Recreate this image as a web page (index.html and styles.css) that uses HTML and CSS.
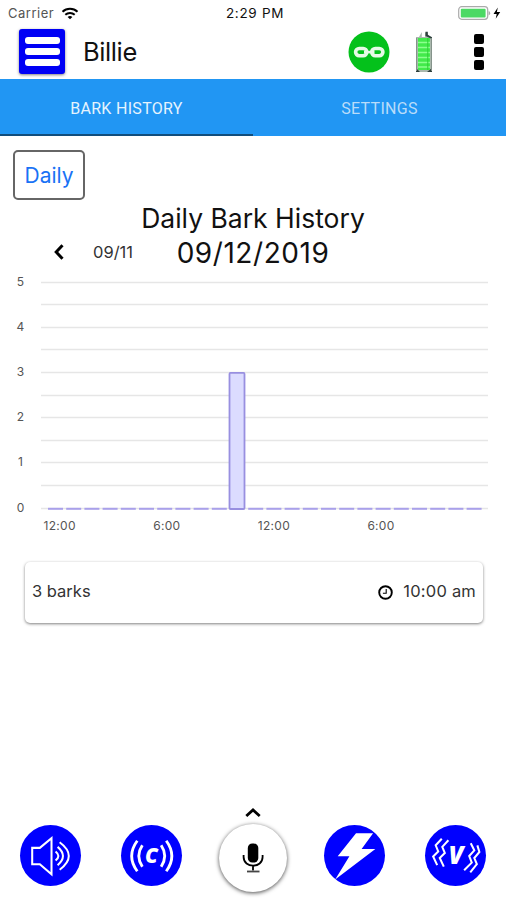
FILE: index.html
```
<!DOCTYPE html>
<html lang="en">
<head>
    <meta charset="UTF-8">
    <meta name="viewport" content="width=device-width, initial-scale=1.0">
    <title>Bark History</title>
    <link rel="stylesheet" href="styles.css">
</head>

<body>
    <div class="status-bar">
      <div class="carrier">
        <span>Carrier</span>
        <svg width="18" height="13" viewBox="0 0 18 13" fill="none" stroke="#000" stroke-width="2">
          <path d="M1.5 4.8a11 11 0 0 1 15 0" />
          <path d="M4.3 7.8a7 7 0 0 1 9.4 0" />
          <path d="M9 12.3 6.6 10a3.6 3.6 0 0 1 4.8 0z" fill="#000" stroke="none" />
        </svg>
      </div>
      <span class="clock">2:29 PM</span>
      <div class="power">
        <svg width="44" height="16" viewBox="0 0 44 16">
          <rect x="0.7" y="1.7" width="29" height="12.6" rx="3" fill="#fff" stroke="#aaa" stroke-width="1.2" />
          <rect x="2.8" y="3.7" width="24.8" height="8.8" rx="1" fill="#4cd964" />
          <path d="M30.6 6v4.4q1.6-.6 1.6-2.2T30.6 6z" fill="#aaa" />
          <path d="M39.8 2.5 35.5 9h3.2l-1 4.8L42.2 7h-3.3z" />
        </svg>
      </div>
    </div>

    <header class="header">
      <button class="menu-btn" aria-label="Menu"><span></span><span></span><span></span></button>
      <h1>Billie</h1>
      <svg class="link-icon" width="42" height="42" viewBox="0 0 42 42">
        <circle cx="21" cy="21" r="20.5" fill="#04c11b" />
        <g fill="none" stroke="#e6fae6" stroke-width="3.6">
          <rect x="7.600" y="17.500" width="11.200" height="7.200" rx="3.600" />
          <rect x="23.700" y="17.500" width="11.200" height="7.200" rx="3.600" />
          <path d="M16 21.100h10.500" stroke-width="2.600" />
        </g>
      </svg>
      <svg class="collar-battery" width="18" height="42" viewBox="0 0 18 42">
        <path d="M1 6h3l2.500-4.500h6L13.500 5 17 6.500V41H1z" fill="#a9b8ad" />
        <path d="M6.800 0h3.200v6H6.800z" fill="#fff" />
        <path d="M10.500.8h2.300v3L17 6.300v1.800L10.500 5zM1 37l4 4H1zM17 37l-5 4h5z" fill="#2e403d" />
        <rect x="3" y="7" width="12" height="32" fill="#43ea4b" />
        <path d="M3 11.500h12M3 16.500h12M3 21.500h12M3 26.500h12M3 31.500h12M3 36h12" stroke="#8cff8e" stroke-width="1.300" />
        <path d="M12.800 7v32" stroke="#2bd033" />
        <path d="M1.500 7v33M16.500 7v33" stroke="#85938b" />
      </svg>
      <button class="more-btn" aria-label="More"><span></span><span></span><span></span></button>
    </header>

    <nav class="tabs">
      <a class="tab active">BARK HISTORY</a>
      <a class="tab">SETTINGS</a>
    </nav>

    <main>
      <button class="period-btn">Daily</button>

      <h2>Daily Bark History</h2>
      <div class="date-row">
        <div class="previous">
          <svg width="10" height="16" viewBox="0 0 10 16" fill="none" stroke="#000" stroke-width="3">
            <path d="M8.5 1.200 2.200 8l6.300 6.800" />
          </svg>
          <span>09/11</span>
        </div>
        <h2 class="current-date">09/12/2019</h2>
      </div>

      <svg id="chart" width="506" height="270" viewBox="0 0 506 270"></svg>

      <div class="bark-card">
        <span>3 barks</span>
        <div class="bark-time">
          <svg width="15" height="15" viewBox="0 0 15 15" fill="none" stroke="#000">
            <circle cx="7.5" cy="7.5" r="6.3" stroke-width="1.9" />
            <path d="M8.2 4v4.3H4.9" stroke-width="1.1" />
          </svg>
          <span>10:00 am</span>
        </div>
      </div>
    </main>

    <footer class="actions">
      <button class="action" aria-label="Sound">
        <svg viewBox="0 0 60 60" fill="none" stroke="#fff" stroke-width="2">
          <path d="M12 22.5h7.5L31 13v35.500L19.500 38.500H12z" />
          <path d="M35 26q5.500 4.500 0 9M37 21.500q10.500 9 0 18M39 17q18 13.500 0 27" />
        </svg>
      </button>
      <button class="action" aria-label="Correction">
        <svg viewBox="0 0 60 60" fill="none" stroke="#fff" stroke-width="2.8">
          <path d="M16 15.500q-11 15 0 30M21 20q-7 10.500 0 21M39.500 20q7 10.500 0 21M44.500 15.500q11 15 0 30" />
          <text x="30" y="37.500" class="letter" font-size="20">C</text>
        </svg>
      </button>
      <div class="mic-wrap">
        <svg class="up-arrow" width="16" height="10" viewBox="0 0 16 10" fill="none" stroke="#000" stroke-width="2.8">
          <path d="m1.300 8 6.700-6 6.700 6" />
        </svg>
        <button class="mic" aria-label="Record">
          <svg width="22" height="30" viewBox="0 0 22 30">
            <rect x="5.800" y="0.500" width="10.500" height="19" rx="4.500" />
            <path d="M1.600 12v2c0 11.500 19 11.500 19 0v-2M11 22.500v5" fill="none" stroke="#000" stroke-width="1.8" />
            <path d="M5 28.500h12.500" stroke="#444" stroke-width="1.8" />
          </svg>
        </button>
      </div>
      <button class="action" aria-label="Shock">
        <svg viewBox="0 0 60 60" fill="#fff">
          <path d="M31.500 8h16.800L37 23.500h13.500L11 53.500l14-22.800H13.500z" />
        </svg>
      </button>
      <button class="action" aria-label="Vibration">
        <svg viewBox="0 0 60 60" fill="none" stroke="#fff" stroke-width="2">
          <path d="m16.500 13.500-6 6.500 2.500 6-5 5 4 8.500M23 15l-6 6.500 2.500 6-5 5 4 8.500" />
          <path d="m45 18 3.500 7-5 5.500 2.500 6.500-7.500 7.500M51.500 20l2 6.500-5 6 2.500 6-6.500 8" />
          <text x="30.500" y="38.500" class="letter" font-size="24">V</text>
        </svg>
      </button>
    </footer>

    <script>
const barks = [0, 0, 0, 0, 0, 0, 0, 0, 0, 0, 3, 0, 0, 0, 0, 0, 0, 0, 0, 0, 0, 0, 0, 0];
const hours = { 0: "12:00", 6: "6:00", 12: "12:00", 18: "6:00" };

const chart = document.querySelector("#chart");
const zeroY = 237.5;
const unit = 45.2;

function draw(tag, attrs, text) {
  const el = document.createElementNS("http://www.w3.org/2000/svg", tag);
  Object.keys(attrs).forEach((key) => el.setAttribute(key, attrs[key]));
  if (text !== undefined) el.textContent = text;
  chart.appendChild(el);
}

// Grid
for (let value = 0; value <= 5; value += 0.5) {
  const y = Math.round(zeroY - value * unit) - 0.5;
  draw("path", { d: `M41 ${y}H488`, class: "grid-line" });

  if (value % 1 === 0) {
    draw("text", { x: 20.5, y: y + 3.5, class: "chart-label" }, value);
  }
}

// Bars
barks.forEach((count, hour) => {
  const x = 48 + hour * 18.2;

  if (count) {
    draw("rect", { x: x - 0.5, y: zeroY - count * unit, width: 15, height: count * unit + 0.5, rx: 1, class: "bar" });
  } else {
    draw("path", { d: `M${x} ${zeroY + 0.3}h15`, class: "empty-bar" });
  }

  if (hours[hour]) {
    draw("text", { x: x + 11.7 - hour * 0.35, y: 259, class: "chart-label hour-label" }, hours[hour]);
  }
});
    </script>
</body>
</html>
```
FILE: styles.css
```
* {
    margin: 0;
    padding: 0;
    box-sizing: border-box;
    font-family: Inter, "Liberation Sans", sans-serif;
}

body {
    display: flex;
    flex-direction: column;
    height: 100vh;
    background-color: #fff;
    color: #111;
    overflow: hidden;
}

button {
    border: none;
    background: none;
    cursor: pointer;
}

svg {
    display: block;
    flex-shrink: 0;
}

/* Status bar */
.status-bar {
    display: grid;
    grid-template-columns: 1fr auto 1fr;
    align-items: center;
    height: 26px;
    padding: 0 4px 0 8px;
    font-size: 13px;
}

.carrier {
    display: flex;
    align-items: center;
    gap: 7px;
    color: #555;
    letter-spacing: 0.5px;
}

.clock {
    font-size: 13.5px;
    letter-spacing: 0.7px;
}

.power {
    display: flex;
    justify-content: flex-end;
}

/* Header */
.header {
    display: flex;
    align-items: center;
    height: 53px;
    padding: 0 22px 2px 19px;
}

.menu-btn {
    display: flex;
    flex-direction: column;
    align-items: center;
    justify-content: center;
    gap: 4px;
    width: 46px;
    height: 45px;
    border-radius: 3px;
    background-color: #0000f5;
    box-shadow: 0 1px 3px rgba(0, 0, 0, 0.5);
}

.menu-btn span {
    width: 35px;
    height: 7px;
    border-radius: 3px;
    background-color: #fff;
}

.header h1 {
    flex: 1;
    margin-left: 18px;
    font-size: 25.5px;
    font-weight: 400;
    letter-spacing: -0.4px;
}

.collar-battery {
    margin: 0 41px 0 25px;
}

.more-btn {
    display: flex;
    flex-direction: column;
    gap: 3px;
}

.more-btn span {
    width: 10px;
    height: 10px;
    border-radius: 2px;
    background-color: #000;
}

/* Tabs */
.tabs {
    display: flex;
    height: 57px;
    background-color: #2196f3;
}

.tab {
    display: flex;
    flex: 1;
    align-items: center;
    justify-content: center;
    padding-top: 4px;
    border-bottom: 2px solid transparent;
    font-family: Roboto, sans-serif;
    font-size: 16px;
    letter-spacing: 0.3px;
    color: #b9dcfa;
}

.tab.active {
    border-color: #114d7c;
    color: #e5f3fe;
}

/* History */
main {
    display: flex;
    flex: 1;
    flex-direction: column;
}

.period-btn {
    width: 72px;
    height: 50px;
    margin: 14px 0 0 13px;
    border: 2px solid #666;
    border-radius: 5px;
    font-size: 21px;
    color: #1972f5;
}

h2 {
    font-size: 26.5px;
    font-weight: 400;
    line-height: 35px;
    text-align: center;
}

main > h2 {
    margin-top: 1px;
}

.date-row {
    display: grid;
    grid-template-columns: 1fr auto 1fr;
    align-items: center;
    height: 35px;
}

.current-date {
    font-size: 28px;
    letter-spacing: 0.55px;
}

.previous {
    display: flex;
    align-items: center;
    gap: 29px;
    padding: 0 0 3px 54px;
    font-size: 16.5px;
    color: #333;
}

.grid-line {
    stroke: #e6e6e6;
    stroke-width: 1.4;
}

.bar {
    fill: #dcdcff;
    stroke: #988fe0;
    stroke-width: 1.8;
}

.empty-bar {
    stroke: #a9a0ea;
    stroke-width: 2;
}

.chart-label {
    font-size: 12px;
    fill: #555;
    text-anchor: middle;
}

.hour-label {
    letter-spacing: 0.3px;
}

.bark-card {
    display: flex;
    align-items: center;
    justify-content: space-between;
    height: 61px;
    margin: 21px 23px 0 25px;
    padding: 0 7px 3px;
    border-radius: 5px;
    box-shadow: 0 1px 3px rgba(0, 0, 0, 0.5);
    font-size: 16.5px;
    color: #333;
}

.bark-time {
    display: flex;
    align-items: center;
    gap: 10px;
    letter-spacing: 0.2px;
}

.bark-time svg {
    margin-top: 2px;
}

/* Bottom actions */
.actions {
    display: grid;
    grid-template-columns: repeat(5, 1fr);
    align-items: end;
    justify-items: center;
    height: 93px;
    padding-bottom: 8px;
}

.action {
    width: 61px;
    height: 61px;
    margin-bottom: 6px;
    border-radius: 50%;
    background-color: #00f;
}

.letter {
    font-family: "Open Sans", sans-serif;
    font-weight: 800;
    font-style: italic;
    fill: #fff;
    stroke: none;
    text-anchor: middle;
}

.mic-wrap {
    display: flex;
    flex-direction: column;
    align-items: center;
    gap: 6px;
}

.mic {
    display: flex;
    align-items: center;
    justify-content: center;
    width: 68px;
    height: 68px;
    border-radius: 50%;
    background-color: #fff;
    box-shadow: 0 1px 4px rgba(0, 0, 0, 0.7);
}
```
